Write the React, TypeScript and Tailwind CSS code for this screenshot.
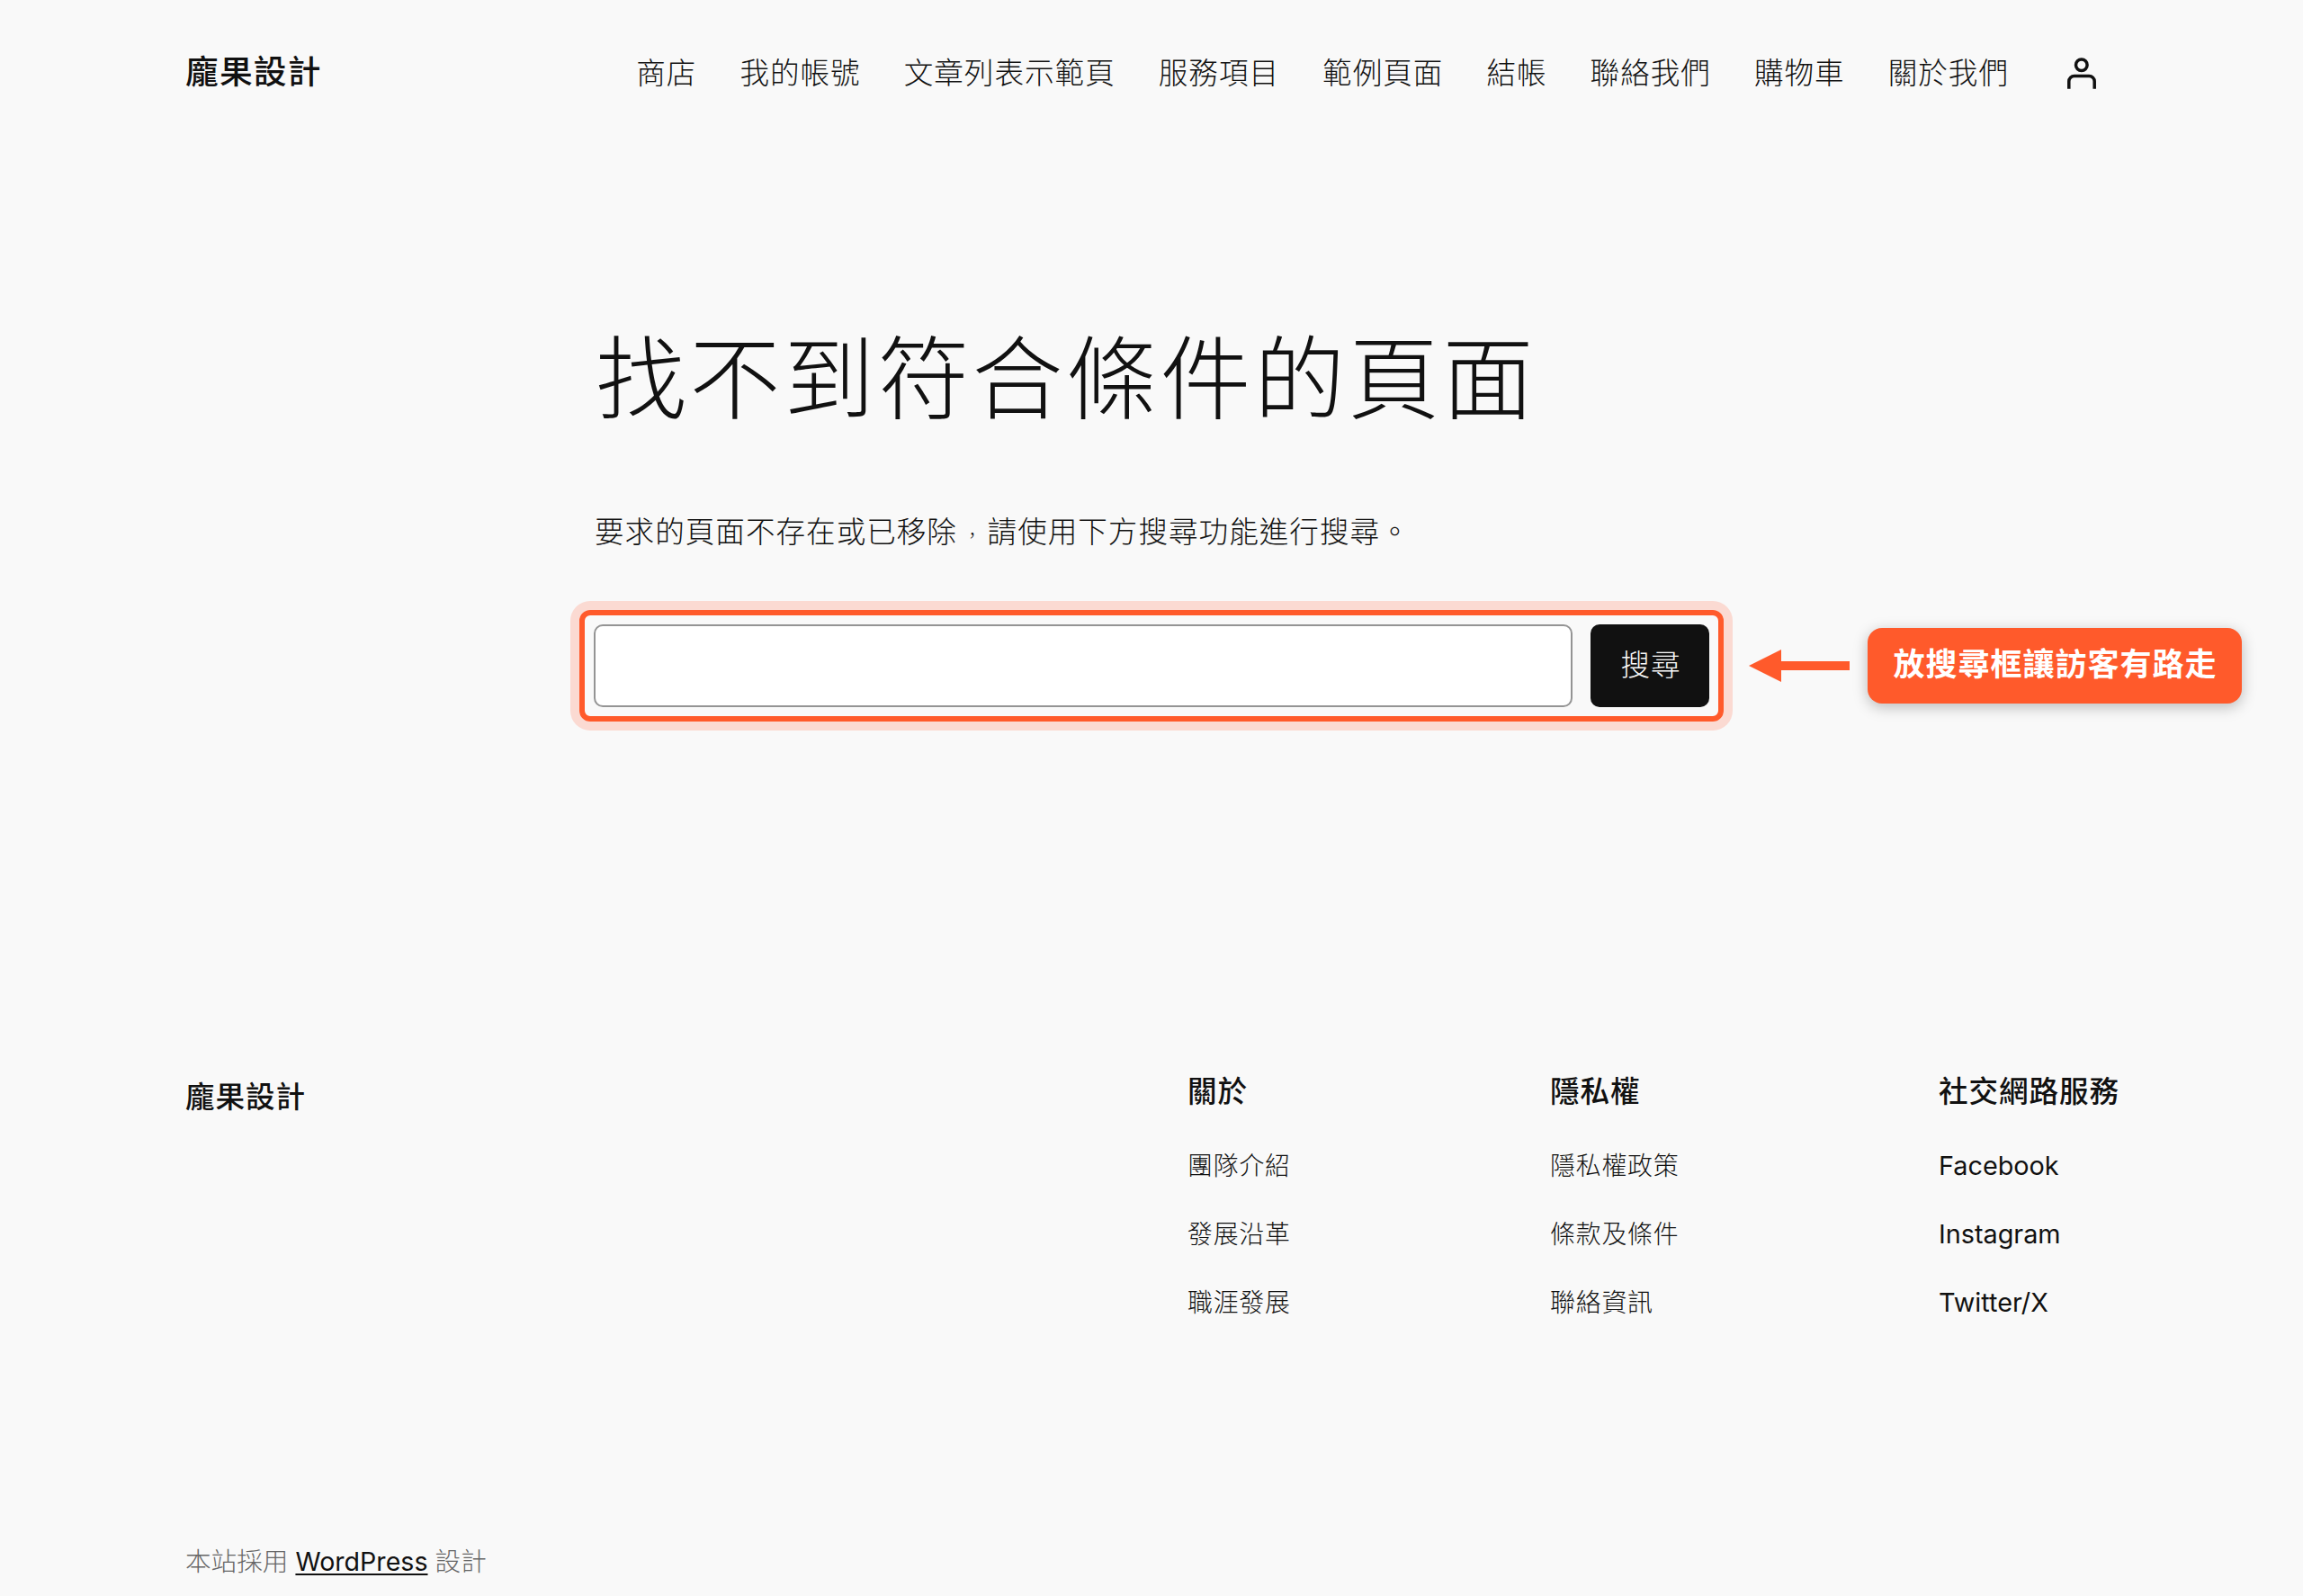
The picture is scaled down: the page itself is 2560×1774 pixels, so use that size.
import React from 'react';

const NAV_ITEMS = ['商店', '我的帳號', '文章列表示範頁', '服務項目', '範例頁面', '結帳', '聯絡我們', '購物車', '關於我們'];

const FOOTER_COLUMNS = [
    { title: '關於', links: ['團隊介紹', '發展沿革', '職涯發展'], width: 'w-[403px]' },
    { title: '隱私權', links: ['隱私權政策', '條款及條件', '聯絡資訊'], width: 'w-[432px]' },
    { title: '社交網路服務', links: ['Facebook', 'Instagram', 'Twitter/X'], width: 'w-[202px]' },
];

const AccountIcon = () => (
    <svg viewBox="0 0 36 36" className="w-9 h-9" fill="none" stroke="currentColor" strokeWidth="3.5">
        <circle cx="17.8" cy="9.3" r="6.3" />
        <path d="M3.8 35.7v-8.3a6 6 0 0 1 6-6h16.4a6 6 0 0 1 6 6v8.3" />
    </svg>
);

const Header = () => (
    <header className="h-[162px] pl-[206px] pr-[228px] flex items-center">
        <a href="#" className="mb-0.5 text-[36.8px] leading-[60px] tracking-[1.1px] font-medium">龐果設計</a>
        <nav className="ml-auto flex gap-12 text-[32.6px] leading-[54px] tracking-[1px] font-light">
            {NAV_ITEMS.map((item) => (
                <a key={item} href="#" className="whitespace-nowrap">{item}</a>
            ))}
        </nav>
        <a href="#" className="ml-[63px]"><AccountIcon /></a>
    </header>
);

const SearchSection = () => (
    <main className="pl-[660px] h-[1002px]">
        <h1 className="pt-[187px] pl-0.5 text-[101px] leading-[144px] tracking-[3.6px] font-light">找不到符合條件的頁面</h1>
        <p className="pt-[71px] pl-px text-[32.6px] leading-[54px] tracking-[1px] font-light">
            要求的頁面不存在或已移除<span className="inline-block w-[33.6px] text-center text-[20px] tracking-normal leading-none">，</span>請使用下方搜尋功能進行搜尋。
        </p>

        <div className="mt-[60px] -ml-4 flex items-center">
            {/* Highlighted search form */}
            <form className="w-[1272px] h-[124px] p-2.5 flex gap-5 border-6 border-[#ff5a2b] rounded-xl shadow-[0_0_0_10px_#fbdad2]">
                <input type="text" aria-label="搜尋" className="w-[1088px] h-[92px] bg-white border-2 border-[#949494] rounded-[10px] outline-none" />
                <button type="button" className="w-[132px] h-[92px] pl-0.5 pb-0.5 bg-[#111111] text-[#f9f9f9] rounded-[10px] text-[32.6px] tracking-[1px] font-light">搜尋</button>
            </form>

            <svg viewBox="0 0 112 36" className="ml-7 w-28 h-9 shrink-0" fill="#ff5a2b">
                <path d="M0 18L36 0v13h76v10H36v13z" />
            </svg>

            <div className="ml-5 w-[416px] h-[84px] pb-[3px] pl-px flex items-center justify-center bg-[#ff5a2b] text-white text-[35px] tracking-[1px] font-bold whitespace-nowrap rounded-2xl shadow-[0_4px_16px_rgba(0,0,0,0.25)]">
                放搜尋框讓訪客有路走
            </div>
        </div>
    </main>
);

const Footer = () => (
    <footer className="pl-[206px]">
        <div className="flex h-[530px]">
            <div className="w-[1114px] shrink-0 pt-[28px] text-[32.6px] leading-[54px] tracking-[0.9px] font-medium">龐果設計</div>
            {FOOTER_COLUMNS.map((column) => (
                <div key={column.title} className={column.width + ' shrink-0 pt-[22px]'}>
                    <h2 className="text-[32.6px] leading-[54px] tracking-[0.9px] font-medium whitespace-nowrap">{column.title}</h2>
                    <ul className="pt-[33px] flex flex-col gap-[30px] text-[28.8px] leading-[46px]">
                        {column.links.map((link) => (
                            <li key={link}>
                                <a href="#" className={/^[A-Z]/.test(link) ? 'font-normal' : 'font-light text-[27.9px] tracking-[0.8px]'}>{link}</a>
                            </li>
                        ))}
                    </ul>
                </div>
            ))}
        </div>
        <p className="pt-[19px] text-[28.6px] leading-[46px] font-light text-[#666666]">
            本站採用 <a href="#" className="font-normal text-[#111111] underline underline-offset-[3px] decoration-2">WordPress</a> 設計
        </p>
    </footer>
);

const App = () => (
    <div className="w-[2560px] h-[1774px] overflow-hidden bg-[#f9f9f9] text-[#111111] font-['Inter','Noto_Sans_CJK_TC',sans-serif]">
        <Header />
        <SearchSection />
        <Footer />
    </div>
);

export default App;
